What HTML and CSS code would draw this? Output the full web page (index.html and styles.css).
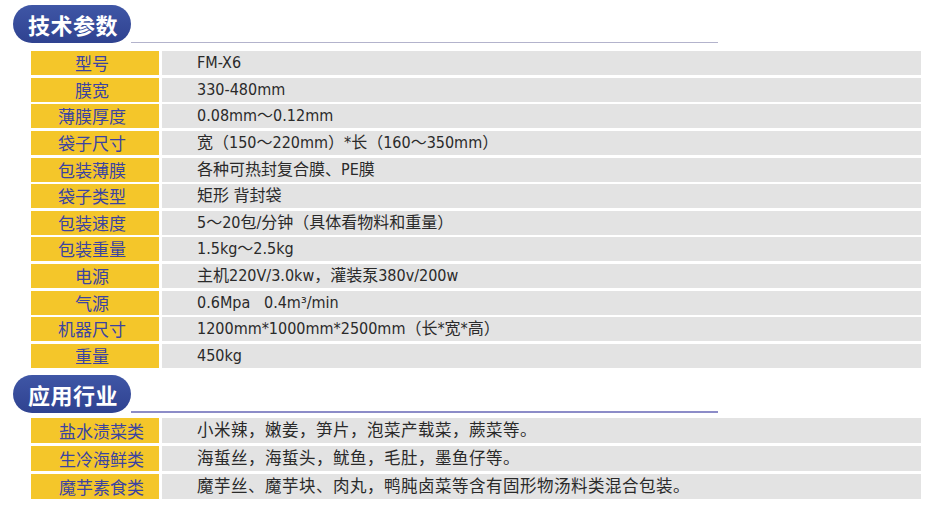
FILE: index.html
```html
<!DOCTYPE html>
<html lang="zh-CN">
<head>
<meta charset="utf-8">
<link rel="stylesheet" href="styles.css">
</head>
<body>
<section class="sec">
  <div class="head"><div class="pill">技术参数</div><div class="rule"></div></div>
  <div class="tbl spec">
    <div class="row"><div class="lab">型号</div><div class="val">FM-X6</div></div>
    <div class="row"><div class="lab">膜宽</div><div class="val">330-480mm</div></div>
    <div class="row"><div class="lab">薄膜厚度</div><div class="val">0.08mm～0.12mm</div></div>
    <div class="row"><div class="lab">袋子尺寸</div><div class="val">宽（150～220mm）*长（160～350mm）</div></div>
    <div class="row"><div class="lab">包装薄膜</div><div class="val">各种可热封复合膜、PE膜</div></div>
    <div class="row"><div class="lab">袋子类型</div><div class="val">矩形 背封袋</div></div>
    <div class="row"><div class="lab">包装速度</div><div class="val">5～20包/分钟（具体看物料和重量）</div></div>
    <div class="row"><div class="lab">包装重量</div><div class="val">1.5kg～2.5kg</div></div>
    <div class="row"><div class="lab">电源</div><div class="val">主机220V/3.0kw，灌装泵380v/200w</div></div>
    <div class="row"><div class="lab">气源</div><div class="val">0.6Mpa&nbsp;&nbsp;&nbsp;0.4m³/min</div></div>
    <div class="row"><div class="lab">机器尺寸</div><div class="val">1200mm*1000mm*2500mm（长*宽*高）</div></div>
    <div class="row"><div class="lab">重量</div><div class="val">450kg</div></div>
  </div>
</section>
<section class="sec sec2">
  <div class="head"><div class="pill">应用行业</div><div class="rule rule2"></div></div>
  <div class="tbl app">
    <div class="row"><div class="lab">盐水渍菜类</div><div class="val">小米辣，嫩姜，笋片，泡菜产载菜，蕨菜等。</div></div>
    <div class="row"><div class="lab">生冷海鲜类</div><div class="val">海蜇丝，海蜇头，鱿鱼，毛肚，墨鱼仔等。</div></div>
    <div class="row"><div class="lab">魔芋素食类</div><div class="val">魔芋丝、魔芋块、肉丸，鸭肫卤菜等含有固形物汤料类混合包装。</div></div>
  </div>
</section>
</body>
</html>
```
FILE: styles.css
```css
html, body {
  margin: 0;
  padding: 0;
  background: #ffffff;
  width: 930px;
  height: 514px;
  overflow: hidden;
}
body {
  font-family: "Liberation Sans Narrow", "DejaVu Sans", "Noto Sans CJK SC", sans-serif;
}
.sec {
  padding-top: 5px;
}
.sec2 {
  padding-top: 7px;
}
.head {
  display: flex;
  align-items: flex-end;
  padding-left: 13px;
}
.pill {
  width: 118px;
  height: 38px;
  border-radius: 19px;
  background: linear-gradient(#3f56a6, #2f4290);
  color: #ffffff;
  font-family: "Noto Sans CJK SC", sans-serif;
  font-weight: 700;
  font-size: 22px;
  line-height: 38px;
  text-align: center;
  letter-spacing: 0.5px;
  box-sizing: border-box;
  padding-left: 2px;
}
.rule {
  width: 587px;
  border-bottom: 1px solid #b3b3cc;
}
.rule2 {
  border-bottom: 2px solid #8c8cc8;
}
.tbl {
  display: flex;
  flex-direction: column;
  margin-left: 31px;
  width: 890px;
}
.spec {
  margin-top: 8px;
  gap: 2.64px;
}
.app {
  margin-top: 5px;
  gap: 3px;
}
.row {
  display: flex;
  gap: 3px;
  height: 24px;
}
.app .row {
  height: 25px;
}
.lab {
  width: 128px;
  flex: none;
  background: #f4c62a;
  color: #3b43a2;
  font-family: "Noto Sans CJK SC", sans-serif;
  font-size: 17px;
  line-height: 24px;
  text-align: center;
  padding-right: 6px;
  box-sizing: border-box;
}
.app .lab {
  line-height: 25px;
  padding-right: 0;
  padding-left: 13px;
}
.val {
  flex: 1;
  background: #e3e3e3;
  color: #2a2a2a;
  font-size: 16px;
  line-height: 24px;
  padding-left: 35px;
  white-space: nowrap;
  font-stretch: condensed;
}
.app .val {
  line-height: 25px;
  font-size: 16.5px;
  letter-spacing: 0.5px;
}
```
